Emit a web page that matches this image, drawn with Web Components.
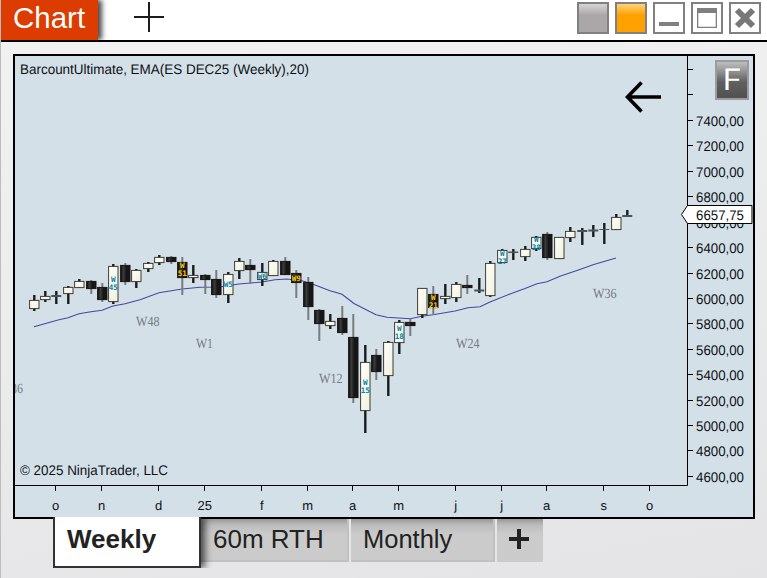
<!DOCTYPE html>
<html lang="en">
<head>
<meta charset="utf-8">
<title>Chart</title>
<style>
    html, body {
        margin: 0;
        height: 100%;
        overflow: hidden;
        font-family: "Liberation Sans", Arial, sans-serif;
    }
</style>
</head>
<body>
<chart-window>
    <title-tab slot="title">Chart</title-tab>
    <window-button slot="buttons" kind="gray"></window-button>
    <window-button slot="buttons" kind="orange"></window-button>
    <window-button slot="buttons" kind="minimize"></window-button>
    <window-button slot="buttons" kind="maximize"></window-button>
    <window-button slot="buttons" kind="close"></window-button>
    <price-chart></price-chart>
    <sheet-tab slot="tabs" active>Weekly</sheet-tab>
    <sheet-tab slot="tabs">60m RTH</sheet-tab>
    <sheet-tab slot="tabs" style="--tab-width: 144px; --tab-size: 25.5px">Monthly</sheet-tab>
    <sheet-tab slot="tabs" add></sheet-tab>
</chart-window>

<script>
/**
 * Window frame: title bar, chart area and the sheet tabs under it
 */
const windowTemplate = document.createElement("template");
windowTemplate.innerHTML = `
    <style>
        :host {
            display: flex;
            flex-direction: column;
            box-sizing: border-box;
            height: 100%;
            border-left: 1px solid #bcbcbc;
            background: linear-gradient(170deg, #f2f2f2 0%, #ededee 40%, #e4e4e6 100%);
        }

        header {
            display: flex;
            height: 40px;
            background: #fff;
            border-bottom: 2px solid #000;
        }

        .new {
            margin: 2px 0 0 36px;
            width: 30px;
            height: 30px;
        }

        .buttons {
            display: flex;
            gap: 6px;
            margin: 2px 6px 0 auto;
        }

        main {
            padding: 12px 12px 0;
        }

        footer {
            display: flex;
            align-items: flex-start;
            margin: -2px 0 0 52px;
        }
    </style>
    <header>
        <slot name="title"></slot>
        <svg class="new" viewBox="0 0 30 30">
            <path d="M0 15H30M15 0V30" stroke="#1c1c1c" stroke-width="2" fill="none"/>
        </svg>
        <div class="buttons"><slot name="buttons"></slot></div>
    </header>
    <main><slot></slot></main>
    <footer><slot name="tabs"></slot></footer>
`;

class ChartWindow extends HTMLElement {
    constructor() {
        super();
        const shadow = this.attachShadow({ mode: "open" });
        shadow.append(windowTemplate.content.cloneNode(true));
    }
}

/**
 * Orange title tab
 */
const titleTemplate = document.createElement("template");
titleTemplate.innerHTML = `
    <style>
        :host {
            display: block;
            box-sizing: border-box;
            width: 97px;
            height: 40px;
            padding-left: 12px;
            background: #dc3c00;
            box-shadow: 4px 0 5px rgba(0, 0, 0, 0.7);
            clip-path: inset(0 -12px 0 0);
            color: #fff;
            font-size: 29.5px;
            line-height: 35px;
        }
    </style>
    <slot></slot>
`;

class TitleTab extends HTMLElement {
    constructor() {
        super();
        const shadow = this.attachShadow({ mode: "open" });
        shadow.append(titleTemplate.content.cloneNode(true));
    }
}

/**
 * Title bar buttons, "kind" picks the fill or the icon
 */
const buttonIcons = {
    gray: ``,
    orange: ``,
    minimize: `<path d="M4 18h20v4H4z"/>`,
    maximize: `<path d="M4 4h20v20H4z M5.3 9v13.7h17.4V9z" fill-rule="evenodd"/>`,
    close: `<path d="M6 6L22 22M22 6L6 22" stroke="#787878" stroke-width="6"/>`,
};

class WindowButton extends HTMLElement {
    constructor() {
        super();
        const shadow = this.attachShadow({ mode: "open" });
        shadow.innerHTML = `
            <style>
                :host {
                    display: block;
                    box-sizing: border-box;
                    width: 32px;
                    height: 32px;
                    border: 2px solid #808080;
                    background: #fff;
                }

                :host([kind="gray"]) {
                    background: linear-gradient(#d6d4d4, #aba7a8 40%);
                }

                :host([kind="orange"]) {
                    background: linear-gradient(#ffd27c, #ffa200 40%);
                }

                svg {
                    display: block;
                    fill: #808080;
                }
            </style>
            <svg width="28" height="28" viewBox="0 0 28 28">${buttonIcons[this.getAttribute("kind")] || ""}</svg>
        `;
    }
}

/**
 * Sheet tabs at the bottom
 */
const sheetTemplate = document.createElement("template");
sheetTemplate.innerHTML = `
    <style>
        :host {
            display: block;
            box-sizing: border-box;
            width: var(--tab-width, 148px);
            height: 43px;
            margin: 2px 2px 0 0;
            padding-left: 12px;
            border: 2px solid #c1c1c1;
            border-width: 0 2px 2px 0;
            background: linear-gradient(#999, #bcbcbc 6px, #cbcbcb 15px);
            color: #222;
            font-size: var(--tab-size, 26px);
            line-height: 41px;
        }

        :host([active]) {
            height: 51px;
            margin: 0;
            border: 2px solid #333;
            border-top: 0;
            background: #fff;
            font-weight: bold;
            line-height: 45px;
            position: relative;
            box-shadow: 4px 0 7px rgba(0, 0, 0, 0.65);
            clip-path: polygon(0 0, 148px 0, 148px 2px, 164px 2px, 164px 100%, 0 100%);
        }

        :host([add]) {
            width: 46px;
            padding: 10px 0 0 12px;
            border: 0;
        }

        svg {
            display: none;
        }

        :host([add]) svg {
            display: block;
        }
    </style>
    <slot></slot>
    <svg width="20" height="20" viewBox="0 0 20 20">
        <path d="M0 10H20M10 0V20" stroke="#222" stroke-width="4"/>
    </svg>
`;

class SheetTab extends HTMLElement {
    constructor() {
        super();
        const shadow = this.attachShadow({ mode: "open" });
        shadow.append(sheetTemplate.content.cloneNode(true));
    }
}

// x, high, low, body top, body bottom, kind (w = up, b = down, d = doji), bar label, label y
const bars = [
    [34, 295, 311, 300, 309, "w"],
    [45, 291, 302, 296, 300, "w"],
    [56, 291, 304, 295, 297, "d"],
    [68, 286, 304, 287, 294, "w"],
    [79, 279, 288, 281, 288, "w"],
    [91, 280, 294, 281, 289, "b"],
    [102, 283, 302, 287, 300, "b"],
    [113, 264, 304, 266, 302, "w", "W 45", 282],
    [125, 263, 285, 265, 282, "b"],
    [136, 269, 288, 270, 282, "w"],
    [148, 262, 272, 263, 269, "w"],
    [159, 255, 265, 257, 263, "w"],
    [171, 256, 264, 257, 262, "b"],
    [182, 257, 295, 262, 278, "b", "W 51", 268],
    [193, 265, 283, 275, 278, "w"],
    [205, 274, 294, 275, 280, "b"],
    [216, 270, 298, 279, 295, "b"],
    [228, 272, 303, 274, 295, "w", "W5", 287],
    [239, 258, 279, 261, 271, "w"],
    [250, 259, 284, 265, 270, "b"],
    [262, 263, 286, 272, 280, "w", "W6", 278.5],
    [273, 260, 276, 261, 276, "w"],
    [285, 257, 275, 261, 275, "b"],
    [296, 270, 298, 273, 283, "b", "W9", 280.5],
    [308, 277, 320, 282, 307, "b"],
    [319, 309, 341, 310, 324, "b"],
    [330, 314, 329, 321, 326, "w"],
    [342, 306, 335, 318, 333, "b"],
    [353, 314, 403, 337, 398, "b"],
    [365, 345, 433, 362, 411, "w", "W 15", 385],
    [376, 349, 380, 355, 372, "b"],
    [388, 341, 396, 342, 376, "w"],
    [399, 320, 354, 322, 343, "w", "W 18", 331],
    [410, 319, 336, 322, 326, "b"],
    [422, 288, 318, 288, 315, "w"],
    [433, 286, 315, 294, 308, "b", "W 21", 299.5],
    [445, 284, 304, 296, 299, "w"],
    [456, 282, 302, 284, 298, "w"],
    [467, 275, 294, 285, 288, "b"],
    [479, 278, 293, 289.5, 291.5, "d"],
    [490, 261, 297, 263, 296, "w"],
    [502, 249, 263, 250, 263, "w", "W 27", 255.5],
    [513, 249, 260, 251.5, 253, "d"],
    [525, 246, 261, 249, 257, "w"],
    [536, 236, 251, 237, 249, "w", "W 38", 241.5],
    [547, 232, 260, 234, 258, "b"],
    [559, 237, 259, 237, 259, "w"],
    [570, 227, 242, 231, 238, "w"],
    [582, 228, 245, 230, 232, "d"],
    [593, 225, 237, 229.5, 231.5, "d"],
    [604, 223, 244, 229, 230, "d"],
    [616, 214, 230, 217, 230, "w"],
    [627, 210, 217, 215, 217, "d"],
];

const ema = "34,326.7 58,320 68,317.7 79,313.7 91,311.7 102,310.3 113,306 125,303.7 140,299.8 159,292.7 182,289 200,287.3 220,287 239,284 262,282 275,279.7 287,279 303,281 317,285.7 330,290.7 342,294.3 354,303.5 376,314.7 387,317.3 410,318.7 422,316.2 433,314.7 455,311 468,307.7 480,306.7 490,302 510,294 525,288.5 537,283.7 547,281.7 560,276.3 582,268.7 593,264.7 616,258";

const weeks = [["W48", 136, 326], ["W1", 196, 348], ["W12", 319, 383], ["W24", 456, 348], ["W36", 593, 298]];

const months = [[55, "o"], [101, "n"], [158, "d"], [204, "25"], [261, "f"], [307, "m"], [352, "a"], [398, "m"], [455, "j"], [501, "j"], [546, "a"], [603, "s"], [649, "o"]];

function drawBar([x, high, low, top, bottom, kind, label, labelY]) {
    const cx = x + 0.3;
    const down = kind === "b";
    let out = `<path d="M${cx} ${high}V${low}" stroke="${down ? "#777c80" : "#181c1e"}" stroke-width="${down ? 2 : 2.4}"/>`;
    if (kind === "d") {
        out += `<rect x="${cx - 5}" y="${top}" width="10" height="${bottom - top}" fill="#4a5257"/>`;
    } else {
        out += `<rect x="${cx - 4.7}" y="${top + 0.4}" width="9.4" height="${bottom - top - 0.8}" fill="url(#${down ? "down" : "up"})" stroke="${down ? "#151515" : "#3c3c38"}"/>`;
    }
    if (label) {
        label.split(" ").forEach((part, i) => {
            out += `<text class="bar ${down ? "gold" : "teal"}" x="${cx}" y="${labelY + i * 8}">${part}</text>`;
        });
    }
    return out;
}

function priceAxis() {
    let out = `<path d="M688 69.5h5M688 94.5h5" stroke="#000"/>`;
    for (let i = 0; i < 15; i++) {
        const y = Math.floor(120.5 + i * 25.42);
        out += `<path d="M688 ${y + 0.5}h5" stroke="#000"/>`;
        out += `<text x="696" y="${y + 6}" textLength="48" lengthAdjust="spacingAndGlyphs">${7400 - i * 200},00</text>`;
    }
    return out;
}

function timeAxis() {
    return months.map(([x, name]) =>
        `<path d="M${x + 0.5} 486v5" stroke="#000"/><text class="month" x="${x + 0.7}" y="510">${name}</text>`
    ).join("");
}

/**
 * Chart panel with candles, moving average and both axes
 */
class PriceChart extends HTMLElement {
    constructor() {
        super();
        const shadow = this.attachShadow({ mode: "open" });
        shadow.innerHTML = `
            <style>
                :host {
                    display: block;
                    box-sizing: border-box;
                    width: 742px;
                    height: 465px;
                    border: 2px solid #000;
                    background: #d4e0e8;
                }

                svg {
                    display: block;
                }

                text {
                    font: 14px "Liberation Sans", Arial, sans-serif;
                    fill: #0c1014;
                    text-rendering: geometricPrecision;
                }

                .month {
                    font-size: 13px;
                    text-anchor: middle;
                }

                .week {
                    font: 14px "Liberation Serif", serif;
                    fill: #747c84;
                }

                .bar {
                    font: bold 7.6px "DejaVu Sans Mono", monospace;
                    text-anchor: middle;
                }

                .teal {
                    fill: #0085ad;
                }

                .gold {
                    fill: #ffc800;
                }

                .key {
                    font: 30px "Open Sans", sans-serif;
                    fill: #fff;
                }
            </style>
            <svg width="738" height="461" viewBox="15 56 738 461">
                <defs>
                    <linearGradient id="up" x2="1" y2="1">
                        <stop offset="0" stop-color="#fffffa"/>
                        <stop offset="1" stop-color="#f0f0de"/>
                    </linearGradient>
                    <linearGradient id="down">
                        <stop offset="0" stop-color="#0c0c0c"/>
                        <stop offset="0.3" stop-color="#3c3c3c"/>
                        <stop offset="0.6" stop-color="#161616"/>
                    </linearGradient>
                    <linearGradient id="key" x2="0" y2="1">
                        <stop offset="0" stop-color="#c4c4c4"/>
                        <stop offset="0.55" stop-color="#606060"/>
                        <stop offset="1" stop-color="#505050"/>
                    </linearGradient>
                </defs>
                <text x="20" y="74" textLength="289" lengthAdjust="spacingAndGlyphs">BarcountUltimate, EMA(ES DEC25 (Weekly),20)</text>
                <text x="20" y="475" textLength="148" lengthAdjust="spacingAndGlyphs">© 2025 NinjaTrader, LLC</text>
                <text class="week" x="11" y="393" textLength="12" lengthAdjust="spacingAndGlyphs">36</text>
                ${weeks.map(([name, x, y]) => `<text class="week" x="${x}" y="${y}" textLength="${name.length > 2 ? 23.5 : 17}" lengthAdjust="spacingAndGlyphs">${name}</text>`).join("")}
                <polyline points="${ema}" fill="none" stroke="#4747a0" stroke-width="1.1"/>
                ${bars.map(drawBar).join("")}
                <path d="M687.5 56V485.5H15" fill="none" stroke="#000"/>
                ${priceAxis()}
                ${timeAxis()}
                <path d="M681.5 214.5L687.5 205.5H752V223.5H687.5Z" fill="#fff" stroke="#000"/>
                <path d="M752 206v17" stroke="#777" stroke-width="2"/>
                <text x="696" y="220" textLength="48" lengthAdjust="spacingAndGlyphs">6657,75</text>
                <path d="M661 97H628M641.500 82.500L627.500 97L641.500 111.500" fill="none" stroke="#000" stroke-width="3.6"/>
                <rect x="716" y="61" width="32" height="38" fill="url(#key)" stroke="#9c9c9c" stroke-width="2"/>
                <text class="key" x="722" y="90" textLength="18.5" lengthAdjust="spacingAndGlyphs">F</text>
            </svg>
        `;
    }
}

// define custom elements in the HTML
customElements.define("title-tab", TitleTab);
customElements.define("window-button", WindowButton);
customElements.define("sheet-tab", SheetTab);
customElements.define("price-chart", PriceChart);
customElements.define("chart-window", ChartWindow);
</script>
</body>
</html>
